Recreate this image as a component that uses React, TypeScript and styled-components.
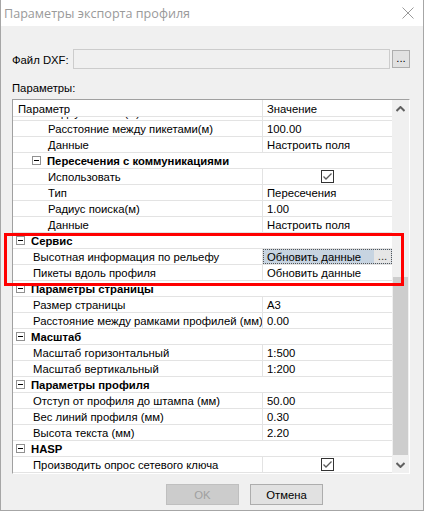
import React, { FC, useLayoutEffect, useRef } from "react";
import styled, { createGlobalStyle } from "styled-components";

const GlobalStyle = createGlobalStyle`
    html, body {
        margin: 0;
        padding: 0;
        background: #fff;
    }
    body {
        font-family: "Liberation Sans", Arial, sans-serif;
        font-size: 11.3px;
        color: #000;
    }
`

const Window = styled.div`
    position: relative;
    box-sizing: border-box;
    width: 424px;
    height: 511px;
    border: 1px solid #a6a6a6;
    border-top: none;
    display: flex;
    flex-direction: column;
    background: #f0f0f0;
`

const TitleBar = styled.div`
    height: 26px;
    flex: none;
    background: #fff;
    display: flex;
    align-items: center;
    justify-content: space-between;
    padding: 0 9px 0 3px;
    & .title{
        font-family: "Open Sans", "Noto Sans", sans-serif;
        font-size: 12.6px;
        color: #9a9a9a;
    }
`

const Body = styled.div`
    flex: 1;
    display: flex;
    flex-direction: column;
    padding: 23px 13px 0 11px;
`

const FileRow = styled.div`
    display: flex;
    align-items: center;
    height: 20px;
    & .fileLabel{
        width: 61px;
        flex: none;
        padding-top: 1px;
    }
`

const FileInput = styled.div`
    flex: 1;
    height: 20px;
    box-sizing: border-box;
    border: 1px solid #cccccc;
    background: #f0f0f0;
`

const SmallButton = styled.div`
    width: 18px;
    height: 18px;
    box-sizing: border-box;
    margin-left: 2px;
    border: 1px solid #adadad;
    background: #e1e1e1;
    display: flex;
    align-items: flex-end;
    justify-content: center;
    line-height: 12px;
    padding-bottom: 3px;
`

const SectionLabel = styled.div`
    margin-top: 11px;
    height: 14px;
    line-height: 16px;
`

const Grid = styled.div`
    margin-top: 5px;
    height: 375px;
    box-sizing: border-box;
    border-top: 1px solid #a0a0a0;
    border-left: 1px solid #a0a0a0;
    border-right: 1px solid #fff;
    border-bottom: 1px solid #fff;
    display: flex;
    background: #fff;
`

const GridMain = styled.div`
    flex: 1;
    min-width: 0;
    display: flex;
    flex-direction: column;
`

const HeaderRow = styled.div`
    height: 17px;
    flex: none;
    box-sizing: border-box;
    display: flex;
    border-bottom: 1px solid #e3e3e3;
    background: #fff;
    & > div{
        line-height: 16px;
        padding: 1px 0 0 5px;
    }
    & .hName{
        width: 250px;
        box-sizing: border-box;
        border-right: 1px solid #e3e3e3;
    }
    & .hValue{
        padding-left: 4px;
    }
`

const Viewport = styled.div`
    flex: 1;
    overflow: hidden;
`

const RowStyle = styled.div<{ $category?: boolean }>`
    height: 16px;
    box-sizing: border-box;
    border-bottom: 1px solid #e3e3e3;
    display: flex;
    align-items: stretch;
    line-height: 15px;
    white-space: nowrap;
    font-weight: ${p => p.$category ? "bold" : "normal"};
`

const NameCell = styled.div<{ $indent: number }>`
    width: 250px;
    flex: none;
    box-sizing: border-box;
    border-right: 1px solid #e3e3e3;
    padding: 1px 0 0 ${p => p.$indent}px;
    overflow: hidden;
`

const CategoryCell = styled.div<{ $indent: number }>`
    flex: 1;
    display: flex;
    align-items: center;
    gap: 6px;
    padding-left: ${p => p.$indent}px;
    & .catText{
        padding-top: 1px;
    }
`

const Toggle = styled.span`
    width: 9px;
    height: 9px;
    box-sizing: border-box;
    border: 1px solid #919191;
    background: #fff;
    position: relative;
    flex: none;
    &::after{
        content: "";
        position: absolute;
        left: 1px;
        top: 3px;
        width: 5px;
        height: 1px;
        background: #000;
    }
`

const ValueCell = styled.div<{ $selected?: boolean }>`
    flex: 1;
    min-width: 0;
    display: flex;
    align-items: stretch;
    padding-left: 4px;
    box-sizing: border-box;
    background: ${p => p.$selected ? "#c7d4e1" : "transparent"};
    outline: ${p => p.$selected ? "1px dotted #555" : "none"};
    outline-offset: -1px;
    &.center{
        justify-content: center;
        align-items: center;
        padding-left: 0;
    }
    & .valueText{
        flex: 1;
        padding-top: 1px;
    }
    & .ellipsis{
        width: 17px;
        background: #e6e6e6;
        text-align: center;
        line-height: 12px;
        color: #333;
        margin: 1px 1px 1px 0;
    }
`

const CheckBox = styled.span`
    width: 13px;
    height: 13px;
    box-sizing: border-box;
    border: 1px solid #333;
    background: #fff;
    display: flex;
    align-items: center;
    justify-content: center;
`

const ScrollBar = styled.div`
    width: 17px;
    flex: none;
    background: #f0f0f0;
    display: flex;
    flex-direction: column;
    & .arrow{
        height: 17px;
        flex: none;
        display: flex;
        align-items: center;
        justify-content: center;
    }
`

const Track = styled.div`
    flex: 1;
    display: flex;
    flex-direction: column;
`

const Thumb = styled.div<{ $offset: number, $size: number }>`
    margin: ${p => p.$offset}px 1px 0 1px;
    height: ${p => p.$size}px;
    background: #cdcdcd;
`

const Footer = styled.div`
    display: flex;
    justify-content: flex-end;
    gap: 11px;
    margin-top: 10px;
    padding-right: 87px;
`

const Button = styled.div<{ $disabled?: boolean }>`
    width: 73px;
    height: 21px;
    box-sizing: border-box;
    border: 1px solid ${p => p.$disabled ? "#bfbfbf" : "#adadad"};
    background: ${p => p.$disabled ? "#cccccc" : "#e1e1e1"};
    color: ${p => p.$disabled ? "#a0a0a0" : "#000"};
    display: flex;
    align-items: center;
    justify-content: center;
    padding-top: 1px;
`

const Highlight = styled.div`
    position: absolute;
    left: 3px;
    top: 233px;
    width: 400px;
    height: 53px;
    box-sizing: border-box;
    border: 3px solid #ff0000;
    pointer-events: none;
`

type RowModel =
    | { kind: "cat", label: string, level: number }
    | { kind: "prop", label: string, level: number, value?: string, checked?: boolean, selected?: boolean }

const rows: RowModel[] = [
    { kind: "prop", label: "Радиус поиска(м)", level: 2, value: "1.00" },
    { kind: "prop", label: "Расстояние между пикетами(м)", level: 2, value: "100.00" },
    { kind: "prop", label: "Данные", level: 2, value: "Настроить поля" },
    { kind: "cat", label: "Пересечения с коммуникациями", level: 2 },
    { kind: "prop", label: "Использовать", level: 2, checked: true },
    { kind: "prop", label: "Тип", level: 2, value: "Пересечения" },
    { kind: "prop", label: "Радиус поиска(м)", level: 2, value: "1.00" },
    { kind: "prop", label: "Данные", level: 2, value: "Настроить поля" },
    { kind: "cat", label: "Сервис", level: 1 },
    { kind: "prop", label: "Высотная информация по рельефу", level: 1, value: "Обновить данные", selected: true },
    { kind: "prop", label: "Пикеты вдоль профиля", level: 1, value: "Обновить данные" },
    { kind: "cat", label: "Параметры страницы", level: 1 },
    { kind: "prop", label: "Размер страницы", level: 1, value: "A3" },
    { kind: "prop", label: "Расстояние между рамками профилей (мм)", level: 1, value: "0.00" },
    { kind: "cat", label: "Масштаб", level: 1 },
    { kind: "prop", label: "Масштаб горизонтальный", level: 1, value: "1:500" },
    { kind: "prop", label: "Масштаб вертикальный", level: 1, value: "1:200" },
    { kind: "cat", label: "Параметры профиля", level: 1 },
    { kind: "prop", label: "Отступ от профиля до штампа (мм)", level: 1, value: "50.00" },
    { kind: "prop", label: "Вес линий профиля (мм)", level: 1, value: "0.30" },
    { kind: "prop", label: "Высота текста (мм)", level: 1, value: "2.20" },
    { kind: "cat", label: "HASP", level: 1 },
    { kind: "prop", label: "Производить опрос сетевого ключа", level: 1, checked: true },
]

const Check: FC = () => <svg width="11" height="11" viewBox="0 0 11 11">
    <path d="M1.5 5.5 L4 8 L9.5 2.5" fill="none" stroke="#5a5a5a" strokeWidth="1.3" />
</svg>

const Chevron: FC<{ up?: boolean }> = ({ up }) => <svg width="9" height="6" viewBox="0 0 9 6">
    <path d={up ? "M0.5 5 L4.5 1 L8.5 5" : "M0.5 1 L4.5 5 L8.5 1"} fill="none" stroke="#606060" strokeWidth="2" />
</svg>

const GridRow: FC<{ row: RowModel }> = ({ row }) => {
    if (row.kind === "cat") {
        return <RowStyle $category>
            <CategoryCell $indent={row.level === 1 ? 3 : 19}>
                <Toggle />
                <span className="catText">{row.label}</span>
            </CategoryCell>
        </RowStyle>
    }
    return <RowStyle>
        <NameCell $indent={row.level === 1 ? 20 : 35}>{row.label}</NameCell>
        {row.checked
            ? <ValueCell className="center"><CheckBox><Check /></CheckBox></ValueCell>
            : <ValueCell $selected={row.selected}>
                <span className="valueText">{row.value}</span>
                {row.selected && <span className="ellipsis">...</span>}
            </ValueCell>
        }
    </RowStyle>
}

const App: FC = () => {
    const viewportRef = useRef<HTMLDivElement>(null);

    useLayoutEffect(() => {
        if (viewportRef.current) {
            viewportRef.current.scrollTop = 12;
        }
    }, []);

    return <>
        <GlobalStyle />
        <Window>
            <TitleBar>
                <span className="title">Параметры экспорта профиля</span>
                <svg width="12" height="12" viewBox="0 0 12 12">
                    <path d="M0.5 0.5 L11.5 11.5 M11.5 0.5 L0.5 11.5" stroke="#9a9a9a" strokeWidth="1" />
                </svg>
            </TitleBar>
            <Body>
                <FileRow>
                    <span className="fileLabel">Файл DXF:</span>
                    <FileInput />
                    <SmallButton>...</SmallButton>
                </FileRow>
                <SectionLabel>Параметры:</SectionLabel>
                <Grid>
                    <GridMain>
                        <HeaderRow>
                            <div className="hName">Параметр</div>
                            <div className="hValue">Значение</div>
                        </HeaderRow>
                        <Viewport ref={viewportRef}>
                            {rows.map((r, i) => <GridRow key={i} row={r} />)}
                        </Viewport>
                    </GridMain>
                    <ScrollBar>
                        <span className="arrow"><Chevron up /></span>
                        <Track>
                            <Thumb $offset={160} $size={178} />
                        </Track>
                        <span className="arrow"><Chevron /></span>
                    </ScrollBar>
                </Grid>
                <Footer>
                    <Button $disabled>OK</Button>
                    <Button>Отмена</Button>
                </Footer>
            </Body>
            <Highlight />
        </Window>
    </>
}

export default App;
